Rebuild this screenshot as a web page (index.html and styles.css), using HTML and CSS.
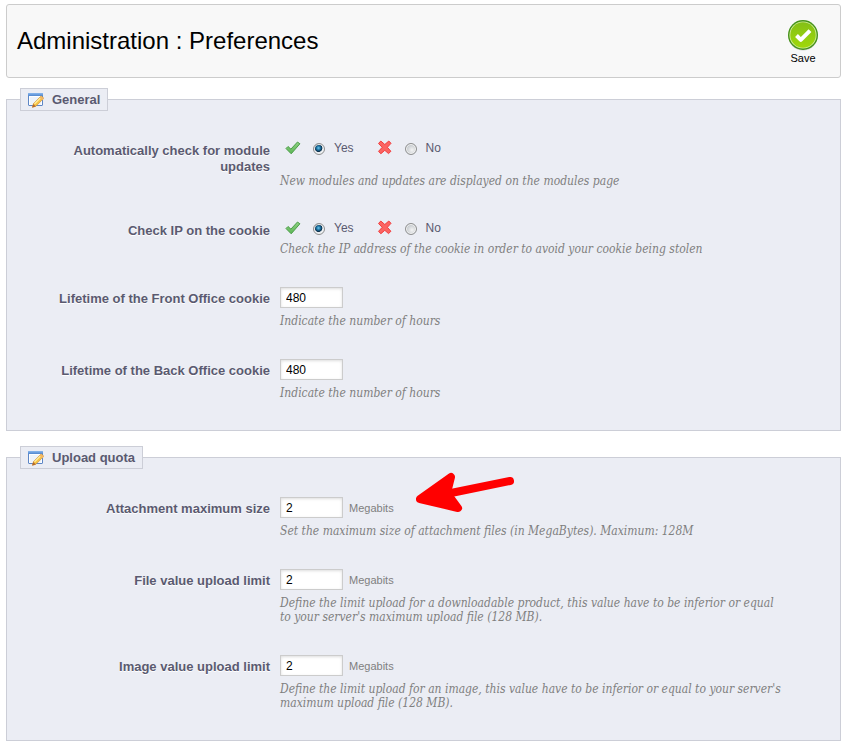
FILE: index.html
```
<!DOCTYPE html>
<html lang="en">

<head>
    <meta charset="UTF-8" />
    <title>Administration : Preferences</title>
    <link rel="stylesheet" href="styles.css">
</head>

<body>
    <!-- shared icons -->
    <svg class="sprite" aria-hidden="true">
        <defs>
            <linearGradient id="bar" x1="0" y1="0" x2="0" y2="1">
                <stop offset="0" stop-color="#8ab8ee" />
                <stop offset="1" stop-color="#4f86cf" />
            </linearGradient>
            <linearGradient id="tick" x1="0" y1="0" x2="0" y2="1">
                <stop offset="0" stop-color="#8fd083" />
                <stop offset="1" stop-color="#5cb655" />
            </linearGradient>
            <linearGradient id="save" x1="0" y1="0" x2="0" y2="1">
                <stop offset="0" stop-color="#84c016" />
                <stop offset="1" stop-color="#a0d80a" />
            </linearGradient>
        </defs>
        <symbol id="icon-edit" viewBox="0 0 16 16">
            <rect x="0.5" y="1.5" width="14" height="12" rx="0.5" fill="#fdfeff" stroke="#5d86c5" />
            <path d="M2 12.500V5h11v7.500z" fill="#edf3fb" />
            <rect x="0" y="1" width="15" height="3" rx="0.5" fill="url(#bar)" />
            <path d="M4.500 15.300l1-3.800 7.200-7.200c.8-.7 3.300 1.500 2.600 2.500l-7.200 7.300z" fill="#f6c445" stroke="#c9893a" stroke-width="0.700" />
            <path d="M6.500 11.800l6.600-6.500" stroke="#ffeb9c" stroke-width="1.500" />
            <path d="M12.300 4.700c1-1 3.900 1.300 3 2.500l-1 1-2.900-2.700z" fill="#f3b765" />
            <path d="M4.200 15.500l1.100-3.600 2.500 2.500z" fill="#b5682a" />
        </symbol>
        <symbol id="icon-yes" viewBox="0 0 16 16">
            <path d="M1 8.500l2-2 2.900 2.600 6.600-7.100 2.400 1.800-8.700 10z" fill="url(#tick)" stroke="#4a9d48" stroke-linejoin="round" />
        </symbol>
        <symbol id="icon-no" viewBox="0 0 16 16">
            <path d="M1.500 3.500L3.800 1l4 3.500 4-3.500L14 3.300 10.400 7.300l3.500 4-2.400 2.300-3.700-3.300L3.900 13.700 1.500 11.400 5.200 7.300z" fill="#fb6462" stroke="#f23c3c" stroke-linejoin="round" />
        </symbol>
    </svg>

    <!-- toolbar -->
    <header class="toolbar">
        <h1>Administration : Preferences</h1>
        <button type="submit" form="preferences" class="save">
            <svg viewBox="0 0 32 32" width="32" height="32" aria-hidden="true">
                <ellipse cx="16" cy="17.500" rx="14.500" ry="14" fill="#cfcfcf" />
                <circle cx="16" cy="16" r="15" fill="#46931a" />
                <circle cx="16" cy="16" r="13.600" fill="#d3ee9a" />
                <circle cx="16" cy="16" r="12.700" fill="url(#save)" />
                <path d="M9.500 16.500l4.300 4.300 9.200-9.100" fill="none" stroke="#fff" stroke-width="4" stroke-linejoin="round" />
            </svg>
            <span>Save</span>
        </button>
    </header>

    <form id="preferences">
        <fieldset>
            <legend><svg class="icon"><use href="#icon-edit" /></svg>General</legend>

            <div class="row" role="radiogroup" aria-labelledby="updates-label">
                <span class="label" id="updates-label">Automatically check for module updates</span>
                <div class="field">
                    <div class="choices">
                        <label class="choice"><svg class="icon"><use href="#icon-yes" /></svg><input type="radio" name="updates" value="1" checked>Yes</label>
                        <label class="choice"><svg class="icon"><use href="#icon-no" /></svg><input type="radio" name="updates" value="0">No</label>
                    </div>
                    <p class="hint spaced">New modules and updates are displayed on the modules page</p>
                </div>
            </div>

            <div class="row" role="radiogroup" aria-labelledby="ip-label">
                <span class="label" id="ip-label">Check IP on the cookie</span>
                <div class="field">
                    <div class="choices">
                        <label class="choice"><svg class="icon"><use href="#icon-yes" /></svg><input type="radio" name="ip" value="1" checked>Yes</label>
                        <label class="choice"><svg class="icon"><use href="#icon-no" /></svg><input type="radio" name="ip" value="0">No</label>
                    </div>
                    <p class="hint">Check the IP address of the cookie in order to avoid your cookie being stolen</p>
                </div>
            </div>

            <div class="row">
                <label class="label" for="front">Lifetime of the Front Office cookie</label>
                <div class="field">
                    <div class="value"><input type="text" id="front" value="480"></div>
                    <p class="hint">Indicate the number of hours</p>
                </div>
            </div>

            <div class="row">
                <label class="label" for="back">Lifetime of the Back Office cookie</label>
                <div class="field">
                    <div class="value"><input type="text" id="back" value="480"></div>
                    <p class="hint">Indicate the number of hours</p>
                </div>
            </div>
        </fieldset>

        <fieldset>
            <legend><svg class="icon"><use href="#icon-edit" /></svg>Upload quota</legend>

            <div class="row">
                <label class="label" for="attachment">Attachment maximum size</label>
                <div class="field">
                    <div class="value"><input type="text" id="attachment" value="2">Megabits</div>
                    <p class="hint">Set the maximum size of attachment files (in MegaBytes). Maximum: 128M</p>
                    <svg class="arrow" viewBox="0 0 100 42" aria-hidden="true">
                        <path d="M94 9L35 21" stroke-width="8" />
                        <path d="M4 27L35 5 31 21 42 36z" stroke-width="8" />
                    </svg>
                </div>
            </div>

            <div class="row">
                <label class="label" for="file">File value upload limit</label>
                <div class="field">
                    <div class="value"><input type="text" id="file" value="2">Megabits</div>
                    <p class="hint">Define the limit upload for a downloadable product, this value have to be inferior or equal to your server's maximum upload file (128 MB).</p>
                </div>
            </div>

            <div class="row">
                <label class="label" for="image">Image value upload limit</label>
                <div class="field">
                    <div class="value"><input type="text" id="image" value="2">Megabits</div>
                    <p class="hint">Define the limit upload for an image, this value have to be inferior or equal to your server's maximum upload file (128 MB).</p>
                </div>
            </div>
        </fieldset>
    </form>
</body>

</html>
```
FILE: styles.css
```
* {
    box-sizing: border-box;
    margin: 0;
    padding: 0;
}

body {
    padding: 4px 7px 7px 6px;
    background-color: #fff;
    color: #5a5a70;
    font-family: "Liberation Sans", Arial, sans-serif;
    font-size: 12px;
}

.sprite {
    position: absolute;
    width: 0;
    height: 0;
}

.icon {
    flex: none;
    width: 16px;
    height: 16px;
}

/* toolbar */
.toolbar {
    display: flex;
    align-items: center;
    justify-content: space-between;
    height: 74px;
    margin-bottom: 10px;
    padding: 0 21px 0 10px;
    border: 1px solid #ccc;
    border-radius: 3px;
    background-color: #f8f8f8;
}

.toolbar h1 {
    color: #000;
    font-size: 24px;
    font-weight: normal;
}

.save {
    display: flex;
    flex-direction: column;
    align-items: center;
    padding-top: 2px;
    border: 0;
    background: none;
    color: #000;
    font-family: inherit;
    font-size: 11px;
    line-height: 14px;
    cursor: pointer;
}

/* form */
fieldset {
    min-width: 0;
    margin-bottom: 15px;
    padding: 28px 13px 30px;
    border: 1px solid #ccced7;
    background-color: #ebedf4;
}

legend {
    display: flex;
    align-items: center;
    gap: 8px;
    height: 23px;
    padding: 0 7px;
    border: 1px solid #ccced7;
    background-color: #ebedf4;
    font-size: 13px;
    font-weight: bold;
}

.row {
    display: flex;
    gap: 10px;
}

.row + .row {
    margin-top: 31px;
}

.label {
    flex: none;
    width: 250px;
    padding: 4px 0 0 10px;
    font-size: 13px;
    font-weight: bold;
    line-height: 16px;
    text-align: right;
    text-shadow: 0 1px 0 #fff;
}

.field {
    position: relative;
    flex: 1;
}

.choices {
    display: flex;
    gap: 23px;
    height: 17px;
    padding-left: 5px;
}

.choice {
    display: flex;
    align-items: center;
}

.choice input {
    appearance: none;
    width: 12px;
    height: 12px;
    margin: 2px 9px 0 12px;
    border: 1px solid #8e8f8f;
    border-radius: 50%;
    background: radial-gradient(circle at 60% 60%, #f4f4f4 0, #c8ccd0 60%);
    box-shadow: inset 0 0 0 1px #f4f4f4;
}

.choice input:checked {
    background: radial-gradient(circle at 45% 40%, #6cc8ee 0, #1a6f9f 25%, #0b2c48 44%, #e8ecf0 52%);
}

.value {
    display: flex;
    align-items: center;
    gap: 6px;
    height: 21px;
    color: #7f7f7f;
    font-size: 11px;
}

.value input {
    width: 63px;
    height: 21px;
    padding: 0 5px;
    border: 1px solid #ccc;
    background-color: #fff;
    box-shadow: inset 0 1px 3px #ddd;
    color: #000;
    font-family: inherit;
    font-size: 12px;
}

.hint {
    max-width: 505px;
    margin-top: 6px;
    color: #7f7f7f;
    font-family: "DejaVu Serif Condensed", Georgia, "Liberation Serif", serif;
    font-size: 12px;
    font-style: italic;
    line-height: 14px;
}

.hint.spaced {
    margin-top: 18px;
}

/* pointer over the attachment field */
.arrow {
    position: absolute;
    top: -25px;
    left: 136px;
    width: 100px;
    height: 42px;
    fill: #f00;
    stroke: #f00;
    stroke-linecap: round;
    stroke-linejoin: round;
}
```
